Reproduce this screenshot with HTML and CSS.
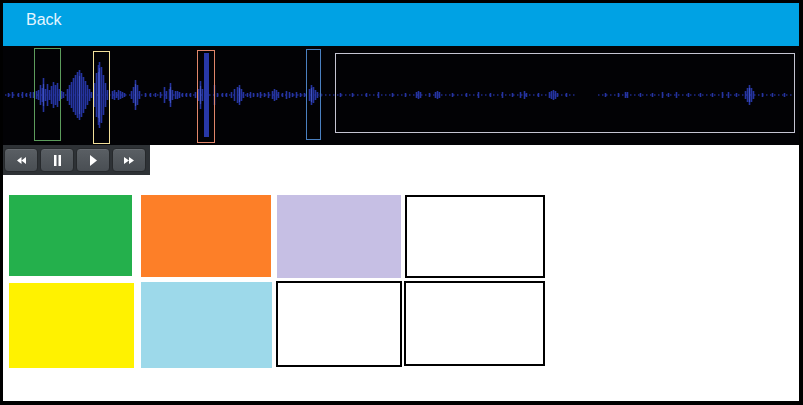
FILE: index.html
```html
<!DOCTYPE html>
<html>
<head>
<meta charset="utf-8">
<link rel="stylesheet" href="styles.css">
</head>
<body>
<div class="frame">
  <div class="page">
    <header class="topbar"><span class="back">Back</span></header>
    <div class="wave">
      <svg class="wave-svg" width="796" height="99" viewBox="3 46 796 99" xmlns="http://www.w3.org/2000/svg">
        <line x1="5" y1="95" x2="575" y2="95" stroke="#1e2a88" stroke-width="1.5" stroke-dasharray="1.5 2.5"/>
        <line x1="598" y1="95" x2="795" y2="95" stroke="#1e2a88" stroke-width="1.5" stroke-dasharray="1.5 2.5"/>
        <path stroke="#2534a0" stroke-width="1.6" fill="none" d="
          M8.5 93V97 M12.5 92V98 M18.5 93V97 M22.5 92V98 M26.5 93V97 M30.5 92V98
          M33.5 92V98 M36.5 91V99 M38.5 90V100 M40.5 85V105 M42.5 88V102 M43.5 78V112 M45.5 89V101 M47.5 84V106 M49.5 90V100 M51.5 86V104 M53.5 82V108 M55.5 85V105 M57.5 83V107 M59.5 89V101 M61.5 91V99 M63.5 92V98
          M67.5 89V101 M69.5 85V105 M71.5 82V108 M73.5 78V112 M75.5 75V115 M77.5 72V118 M79.5 70V120 M81.5 73V117 M83.5 77V113 M85.5 81V109 M87.5 85V105 M89.5 89V101 M91.5 92V98
          M94.5 83V107 M96.5 73V117 M98.5 65V125 M99.5 62V128 M101.5 67V123 M103.5 75V115 M105.5 83V107 M107.5 90V100
          M112.5 91V99 M114.5 90V100 M116.5 92V98 M118.5 90V100 M120.5 91V99 M122.5 92V98 M124.5 93V97
          M131.5 91V99 M133.5 87V103 M135.5 80V110 M137.5 85V105 M139.5 91V99
          M145.5 93V97 M150.5 93V97 M155.5 93V97 M160.5 92V98 M164.5 87V103 M166.5 91V99
          M169.5 89V101 M170.5 83V107 M172.5 90V100 M175.5 91V99 M177.5 91V99 M179.5 92V98 M182.5 93V97 M186.5 93V97 M190.5 93V97 M195.5 92V98 M198.5 89V101 M200.5 81V109 M202.5 89V101
          M214.5 85V105 M217.5 93V97 M222.5 93V97 M226.5 93V97 M231.5 92V98 M234.5 89V101 M237.5 87V103 M239.5 85V105 M241.5 89V101 M243.5 92V98 M247.5 93V97
          M250.5 92V98 M253.5 93V97 M257.5 93V97 M260.5 92V98 M264.5 93V97 M268.5 92V98 M272.5 91V99 M274.5 89V101 M276.5 90V100 M278.5 92V98 M282.5 93V97 M286.5 91V99 M289.5 92V98 M292.5 93V97 M296.5 92V98 M300.5 93V97 M304.5 93V97
          M309.5 89V101 M311.5 85V105 M313.5 87V103 M315.5 90V100 M317.5 92V98 M320.5 93V97
          M340.5 93V97 M352.5 93V97 M366.5 93V97 M378.5 92V98 M392.5 93V97 M405.5 93V97 M416.5 92V98 M418.5 91V99 M420.5 92V98 M429.5 93V97 M435.5 92V98 M437.5 91V99 M439.5 92V98
          M452.5 93V97 M466.5 93V97 M478.5 92V98 M490.5 93V97 M502.5 92V98 M512.5 93V97 M520.5 92V98 M524.5 91V99 M526.5 93V97 M538.5 93V97
          M549.5 92V98 M551.5 91V99 M553.5 90V100 M555.5 91V99 M557.5 93V97 M566.5 93V97
          M605.5 93V97 M618.5 93V97 M625.5 92V98 M627.5 92V98 M640.5 93V97 M652.5 93V97 M662.5 92V98 M668.5 93V97 M676.5 92V98 M688.5 93V97 M700.5 93V97
          M712.5 93V97 M722.5 92V98 M728.5 92V98 M736.5 93V97 M745.5 91V99 M747.5 88V102 M749.5 85V105 M751.5 88V102 M753.5 91V99 M762.5 93V97 M772.5 93V97 M784.5 93V97
        "/>
        <path stroke="#3f52c0" stroke-width="1.2" fill="none" d="M43.5 84V106 M79.5 76V114 M99.5 68V122 M98.5 72V118 M135.5 84V106 M170.5 87V103 M200.5 86V104 M239.5 88V102 M311.5 88V102 M749.5 88V102"/>
        <rect x="204" y="53" width="5" height="84" fill="#2838a8"/>
        <rect x="34.5" y="48.5" width="26" height="92" fill="none" stroke="#5c9c5c"/>
        <rect x="93.5" y="51.5" width="16" height="92" fill="none" stroke="#f2e09a"/>
        <rect x="197.5" y="50.5" width="17" height="92" fill="none" stroke="#e0866a"/>
        <rect x="306.5" y="49.5" width="14" height="90" fill="none" stroke="#4a80c0"/>
        <rect x="335.5" y="53.5" width="459" height="79" fill="none" stroke="#c4c4d2"/>
      </svg>
    </div>
    <div class="controls">
      <button class="ctl" aria-label="Rewind">
        <svg width="9" height="7" viewBox="0 0 9 7"><path d="M4.5 0V7L0 3.5Z M9 0V7L4.5 3.5Z" fill="#fff"/></svg>
      </button>
      <button class="ctl" aria-label="Pause">
        <svg width="7" height="11" viewBox="0 0 7 11"><path d="M0 0H2.5V11H0Z M4.5 0H7V11H4.5Z" fill="#fff"/></svg>
      </button>
      <button class="ctl" aria-label="Play">
        <svg width="7" height="11" viewBox="0 0 7 11"><path d="M0 0L7 5.5L0 11Z" fill="#fff"/></svg>
      </button>
      <button class="ctl" aria-label="Fast forward">
        <svg width="10" height="7" viewBox="0 0 10 7"><path d="M0 0V7L5 3.5Z M5 0V7L10 3.5Z" fill="#fff"/></svg>
      </button>
    </div>
    <div class="swatches">
      <div class="sw green"></div>
      <div class="sw orange"></div>
      <div class="sw lavender"></div>
      <div class="sw blank b1"></div>
      <div class="sw yellow"></div>
      <div class="sw skyblue"></div>
      <div class="sw blank b2"></div>
      <div class="sw blank b3"></div>
    </div>
  </div>
</div>
</body>
</html>
```
FILE: styles.css
```css
* { box-sizing: border-box; }
html, body { margin: 0; padding: 0; }
body {
  background: #000;
  font-family: "Liberation Sans", Arial, sans-serif;
}
.frame {
  width: 803px;
  height: 405px;
  padding: 3px 4px 4px 3px;
  background: #000;
}
.page {
  width: 796px;
  height: 398px;
  background: #fff;
  display: flex;
  flex-direction: column;
  align-items: flex-start;
}
.topbar {
  width: 100%;
  height: 43px;
  background: #00a2e4;
  padding: 8px 0 0 23px;
  flex: none;
}
.back {
  color: #e4f5ff;
  font-size: 16px;
  line-height: 18px;
}
.wave {
  width: 100%;
  height: 99px;
  background: #020205;
  flex: none;
}
.wave-svg { display: block; }
.controls {
  width: 147px;
  height: 30px;
  background: #2e3236;
  display: flex;
  gap: 2px;
  padding: 3px 0 0 1px;
  flex: none;
}
.ctl {
  width: 34px;
  height: 24px;
  margin: 0;
  padding: 0;
  border: 1px solid #26292c;
  border-radius: 4px;
  background: linear-gradient(#5a5f64, #494e53);
  box-shadow: inset 0 1px 0 rgba(255,255,255,0.08);
  display: flex;
  align-items: center;
  justify-content: center;
}
.ctl svg { display: block; }
.swatches {
  margin: 20px 0 0 6px;
  display: grid;
  grid-template-columns: 132px 135px 128px 141px;
  grid-template-rows: 86px 87px;
  align-items: start;
  justify-items: start;
}
.sw { display: block; }
.green { width: 123px; height: 81px; background: #24b04c; }
.orange { width: 130px; height: 82px; background: #fd7f28; }
.lavender { width: 124px; height: 83px; background: #c6bfe4; margin-left: 1px; }
.blank { background: #fff; border: 2px solid #000; }
.b1 { width: 140px; height: 83px; margin-left: 1px; }
.yellow { width: 125px; height: 85px; background: #fff200; margin-top: 2px; }
.skyblue { width: 131px; height: 86px; background: #9dd9ea; margin-top: 1px; }
.b2 { width: 126px; height: 86px; }
.b3 { width: 141px; height: 85px; }
```
